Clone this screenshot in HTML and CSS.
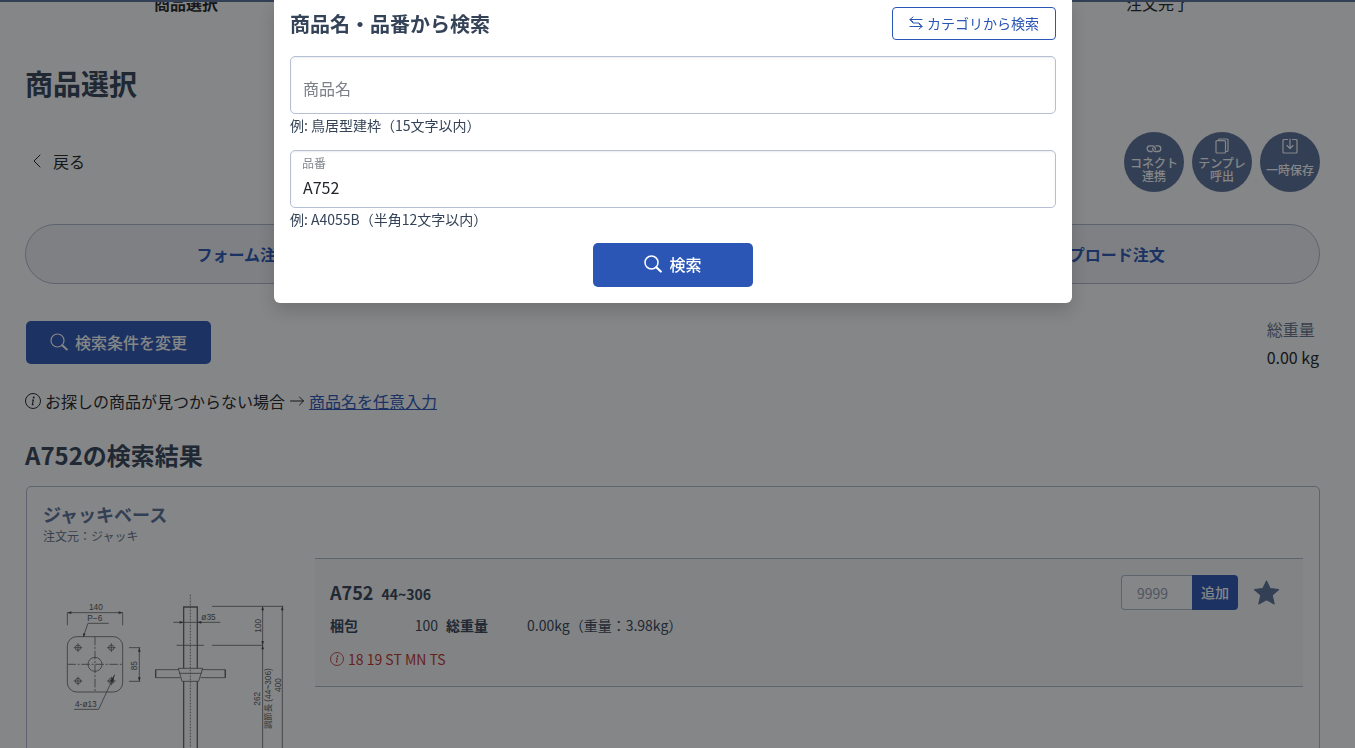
FILE: index.html
```html
<!DOCTYPE html>
<html lang="ja">
<head>
  <meta charset="UTF-8" />
  <meta name="viewport" content="width=device-width, initial-scale=1.0"/>
  <title>商品選択</title>
  <link rel="stylesheet" href="styles.css">
</head>
<body>

  <ol class="stepper">
    <li class="step current">商品選択</li>
    <li class="step">注文完了</li>
  </ol>

  <main class="page">
    <h1 class="page-title">商品選択</h1>

    <div class="toolbar">
      <a class="back-link" href="#">
        <svg class="icon" viewBox="0 0 16 16"><path d="M11 2 5 8 11 14" fill="none" stroke="currentColor" stroke-linecap="round" stroke-linejoin="round"/></svg>
        戻る
      </a>
      <div class="round-actions">
        <button class="round-btn" type="button">
          <svg class="icon" viewBox="0 0 16 16"><g fill="none" stroke="currentColor" stroke-width="1.3" stroke-linecap="round"><path d="M6 13.500H4a2.800 2.800 0 0 1 0-5.600h2.500A2.800 2.800 0 0 1 9.200 11.500"/><path d="M10 7.900h2A2.800 2.800 0 0 1 12 13.500H9.500a2.800 2.800 0 0 1-2.700-3.600"/></g></svg>
          <span>コネクト<br>連携</span>
        </button>
        <button class="round-btn" type="button">
          <svg class="icon" viewBox="0 0 16 16"><g fill="none" stroke="currentColor" stroke-width="1.2" stroke-linejoin="round"><rect x="2" y="2.600" width="9.500" height="12.400" rx="1"/><path d="M4.500 2.600V2a1 1 0 0 1 1-1h7.500a1 1 0 0 1 1 1V12.500a1 1 0 0 1-1 1h-1.500"/></g></svg>
          <span>テンプレ<br>呼出</span>
        </button>
        <button class="round-btn" type="button">
          <svg class="icon" viewBox="0 0 16 16"><g fill="none" stroke="currentColor" stroke-width="1.2" stroke-linecap="round" stroke-linejoin="round"><path d="M5.500 1.500H2a1 1 0 0 0-1 1V14a1 1 0 0 0 1 1h12a1 1 0 0 0 1-1V2.500a1 1 0 0 0-1-1h-3.500"/><path d="M8 1v9.500M5 7.500l3 3 3-3"/></g></svg>
          <span>一時保存</span>
        </button>
      </div>
    </div>

    <nav class="tabs">
      <a class="tab" href="#">フォーム注文</a>
      <a class="tab" href="#">アップロード注文</a>
    </nav>

    <div class="search-row">
      <button class="btn btn-change" type="button">
        <svg class="icon-lg" viewBox="0 0 18 18"><circle cx="7.500" cy="7.500" r="6.500" fill="none" stroke="currentColor" stroke-width="1.200"/><path d="m12.300 12.300 4.500 4.200" stroke="currentColor" stroke-width="2" stroke-linecap="round"/></svg>
        検索条件を変更
      </button>
      <dl class="total">
        <dt>総重量</dt>
        <dd>0.00 kg</dd>
      </dl>
    </div>

    <p class="note">
      <svg class="icon" viewBox="0 0 16 16"><circle cx="8" cy="8" r="7.500" fill="none" stroke="currentColor"/><path d="M7 7h1.400l-1.100 4.600h1.200" fill="none" stroke="currentColor" stroke-width="1.100"/><circle cx="8.700" cy="4.600" r="1" fill="currentColor"/></svg>
      <span>お探しの商品が見つからない場合</span>
      <svg class="icon" viewBox="0 0 16 16"><path d="M1.500 8h13M10.500 4l4 4-4 4" fill="none" stroke="currentColor" stroke-linecap="round" stroke-linejoin="round"/></svg>
      <a href="#">商品名を任意入力</a>
    </p>

    <h2 class="result-title">A752の検索結果</h2>

    <section class="card">
      <h3 class="card-title">ジャッキベース</h3>
      <p class="card-sub">注文元：ジャッキ</p>
      <div class="card-body">
        <svg class="drawing" viewBox="0 0 272 260">
          <g transform="translate(-23 2) scale(.3333)" fill="none" stroke="#666" stroke-width="2.500">
            <!-- base plate -->
            <rect x="142" y="230" width="166" height="166" rx="28"/>
            <circle cx="225" cy="313" r="21"/>
            <path d="M142 313h166M225 230v166" stroke-dasharray="26 5 6 5"/>
            <g>
              <circle cx="174" cy="263" r="8"/><circle cx="274" cy="263" r="8"/>
              <circle cx="174" cy="363" r="8"/><circle cx="274" cy="363" r="8"/>
              <path d="M161 263h26M174 250v26M261 263h26M274 250v26M161 363h26M174 350v26M261 363h26M274 350v26"/>
            </g>
            <path d="M142 196v-38h166v38M266 190h-62l-14 40M162 448h74l48-104M327 263h34M327 364h34M358 263v101"/>
            <!-- screw shaft and handle -->
            <path d="M511 104v500" stroke-dasharray="5 4"/>
            <path d="M491 325V141h41v184M491 364v240M532 364v240" stroke-width="4"/>
            <path d="M475 325h73l-12 39h-50zM477 340h68M477 329h-70v24h74M546 329h70v24h-74"/>
            <path d="M407 329v24M616 329v24" stroke-width="4"/>
            <path d="M460 187h141M470 256h82M576 139h214M576 256h152M728 139v480M787 139v480"/>
            <!-- arrow heads -->
            <g fill="#444" stroke="none">
              <path d="m142 158 12-4v8zM308 158l-12-4v8zM189 232l1-13 7 3zM284 344l-14 20 8 4zM358 263l-4 12h8zM358 364l-4-12h8zM491 187l-12-4v8zM532 187l12-4v8zM728 139l-4 12h8zM728 256l-4-12h8zM728 256l-4 12h8zM787 139l-4 12h8z"/>
            </g>
            <g class="dims">
              <text x="207" y="151">140</text>
              <text x="202" y="184">P−6</text>
              <text x="165" y="440">4-ø13</text>
              <text x="544" y="179">ø35</text>
              <text transform="translate(352 331) rotate(-90)">85</text>
              <text transform="translate(723 218) rotate(-90)">100</text>
              <text transform="translate(721 437) rotate(-90)">262</text>
              <text transform="translate(752 507) rotate(-90)">調節長 (44~306)</text>
              <text transform="translate(782 396) rotate(-90)">400</text>
            </g>
          </g>
        </svg>

        <div class="item">
          <div class="item-head">
            <span class="item-code">A752</span>
            <span class="item-range">44~306</span>
            <form class="qty">
              <input type="text" placeholder="9999" aria-label="数量">
              <button type="button">追加</button>
            </form>
            <button class="star" type="button" aria-label="お気に入り">
              <svg viewBox="0 0 24 24"><path d="M12 1l3.500 7.200 8.200.9-6.200 5.500L19.400 23 12 18.900 4.600 23l1.900-8.400L.300 9.100l8.200-.9z" fill="currentColor" stroke="currentColor" stroke-linejoin="round"/></svg>
            </button>
          </div>
          <dl class="item-info">
            <dt>梱包</dt>
            <dd class="pack">100</dd>
            <dt>総重量</dt>
            <dd class="weight">0.00kg（重量：3.98kg）</dd>
          </dl>
          <p class="item-alert">
            <svg viewBox="0 0 16 16"><circle cx="8" cy="8" r="7.400" fill="none" stroke="currentColor"/><path d="M7 7h1.400l-1.100 4.600h1.200" fill="none" stroke="currentColor" stroke-width="1.100"/><circle cx="8.700" cy="4.600" r="1" fill="currentColor"/></svg>
            18 19 ST MN TS
          </p>
        </div>
      </div>
    </section>
  </main>

  <div class="backdrop">
    <form class="modal" role="dialog" aria-labelledby="modalTitle">
      <div class="modal-head">
        <h2 id="modalTitle">商品名・品番から検索</h2>
        <button class="btn-outline" type="button">
          <svg viewBox="0 0 14 14"><path d="M4 1 1 3.500 4 6M1 3.500H13M10 8l3 2.500L10 13M13 10.500H1M1 3.500 4 7H10l3 3.500" fill="none" stroke="currentColor" stroke-linecap="round" stroke-linejoin="round"/></svg>
          カテゴリから検索
        </button>
      </div>

      <div class="field">
        <label class="sr-only" for="productName">商品名</label>
        <input type="text" id="productName" placeholder="商品名">
        <p class="hint">例: 鳥居型建枠（15文字以内）</p>
      </div>

      <div class="field">
        <label for="productCode">品番</label>
        <input type="text" id="productCode" value="A752">
        <p class="hint">例: A4055B（半角12文字以内）</p>
      </div>

      <button class="btn btn-search" type="button">
        <svg class="icon-lg" viewBox="0 0 18 18"><circle cx="7.500" cy="7.500" r="6.500" fill="none" stroke="currentColor" stroke-width="1.500"/><path d="m12.300 12.300 4.500 4.200" stroke="currentColor" stroke-width="2.200" stroke-linecap="round"/></svg>
        検索
      </button>
    </form>
  </div>

</body>
</html>
```

FILE: styles.css
```css
:root {
  --primary: #2b56b6;
  --navy: #5b7199;
  --text: #344357;
  --muted: #66728c;
  --border: #b5c0d4;
  --line: #aeb9cf;
}

* {
  box-sizing: border-box;
}

body {
  margin: 0;
  height: 100vh;
  overflow: hidden;
  font-family: "Noto Sans CJK JP", sans-serif;
  font-size: 16px;
  line-height: 24px;
  color: #212529;
  background: #fff;
}

h1, h2, h3, p, dl, dd, ol {
  margin: 0;
  padding: 0;
}

button, input {
  font-family: inherit;
  font-size: inherit;
}

button {
  cursor: pointer;
  border: none;
  padding: 0;
}

a {
  color: var(--primary);
}

svg {
  flex: none;
}

.icon {
  width: 16px;
  height: 16px;
}

.icon-lg {
  width: 18px;
  height: 18px;
}

/* stepper */
.stepper {
  display: flex;
  justify-content: space-between;
  align-items: flex-end;
  height: 15px;
  padding: 0 35px 0 24px;
  border-top: 2px solid var(--navy);
  overflow: hidden;
  list-style: none;
}

.step {
  width: 25%;
  text-align: center;
}

.step.current {
  font-weight: bold;
}

/* page */
.page {
  padding: 47px 35px 0 25px;
}

.page-title {
  font-size: 28px;
  line-height: 42px;
  color: var(--text);
}

.toolbar {
  display: flex;
  justify-content: space-between;
  align-items: center;
  margin-top: 28px;
}

.back-link {
  display: flex;
  align-items: center;
  gap: 8px;
  padding: 0 0 2px 4px;
  color: inherit;
  text-decoration: none;
}

.round-actions {
  display: flex;
  gap: 8px;
}

.round-btn {
  display: flex;
  flex-direction: column;
  align-items: center;
  width: 60px;
  height: 60px;
  padding-top: 6px;
  border-radius: 50%;
  background: var(--navy);
  color: #fff;
  font-size: 12px;
  font-weight: 500;
  line-height: 13px;
}

.round-btn span {
  display: flex;
  align-items: center;
  height: 30px;
  white-space: nowrap;
}

.tabs {
  display: flex;
  justify-content: space-between;
  align-items: center;
  height: 60px;
  margin-top: 32px;
  padding: 0 4px;
  border: 1px solid var(--line);
  border-radius: 30px;
  background: #f1f3f8;
}

.tab {
  width: 33.33%;
  text-align: center;
  font-weight: bold;
  text-decoration: none;
}

.search-row {
  display: flex;
  justify-content: space-between;
  align-items: flex-end;
  margin-top: 31px;
}

.btn {
  display: flex;
  align-items: center;
  justify-content: center;
  gap: 7px;
  padding-bottom: 2px;
  border-radius: 5px;
  background: var(--primary);
  color: #fff;
  font-weight: 500;
}

.btn-change {
  height: 43px;
  margin: 0 1px 7px;
  padding: 0 24px 1px;
}

.total {
  line-height: 28px;
  padding-right: 1px;
}

.total dt {
  color: var(--muted);
}

.note {
  display: flex;
  align-items: center;
  gap: 4px;
  margin-top: 18px;
}

.result-title {
  margin-top: 24px;
  font-size: 24px;
  line-height: 36px;
  color: var(--text);
}

/* result card */
.card {
  margin: 13px 0 0 1px;
  padding: 14px 16px;
  border: 1px solid var(--line);
  border-radius: 5px;
}

.card-title {
  font-size: 18px;
  line-height: 26px;
  color: var(--navy);
}

.card-sub {
  font-size: 12px;
  line-height: 18px;
  color: var(--muted);
}

.card-body {
  display: flex;
  align-items: flex-start;
  margin-top: 13px;
}

.drawing {
  width: 272px;
  height: 260px;
}

.dims text {
  font-family: "Liberation Sans", "Noto Sans CJK JP", sans-serif;
  font-size: 25px;
  fill: #555;
  stroke: none;
}

.item {
  flex: 1;
  padding: 16px 24px 16px 15px;
  border-top: 1px solid var(--line);
  border-bottom: 1px solid var(--line);
  background: #f8f9f9;
  font-size: 14px;
  line-height: 22px;
  color: var(--text);
}

.item-head {
  display: flex;
  align-items: center;
}

.item-code {
  padding-bottom: 2px;
  font-size: 18px;
  font-weight: bold;
}

.item-range {
  margin: 2px 0 0 8px;
  font-weight: bold;
}

.qty {
  display: flex;
  height: 35px;
  margin-left: auto;
}

.qty input {
  width: 71px;
  padding: 0 15px;
  border: 1px solid var(--line);
  border-right: none;
  border-radius: 4px 0 0 4px;
  background: #fff;
}

.qty input::placeholder {
  color: #929db5;
}

.qty button {
  width: 46px;
  padding-bottom: 2px;
  border-radius: 0 4px 4px 0;
  background: var(--primary);
  color: #fff;
  font-weight: 500;
}

.star {
  display: flex;
  margin-left: 16px;
  background: none;
  color: var(--navy);
}

.star svg {
  width: 25px;
  height: 25px;
}

.item-info {
  display: flex;
  margin-top: 4px;
}

.item-info dt {
  font-weight: bold;
}

.pack {
  width: 80px;
  margin-right: 8px;
  text-align: right;
}

.weight {
  margin-left: 39px;
}

.item-alert {
  display: flex;
  align-items: center;
  gap: 4px;
  margin-top: 12px;
  color: #c0352f;
}

.item-alert svg {
  width: 14px;
  height: 14px;
}

/* search modal */
.backdrop {
  position: fixed;
  inset: 0;
  display: flex;
  justify-content: center;
  align-items: flex-start;
  padding-right: 9px;
  background: rgba(11, 13, 15, 0.5);
}

.modal {
  width: 100%;
  max-width: 798px;
  padding: 7px 16px 16px;
  border-radius: 0 0 6px 6px;
  background: #fff;
  box-shadow: 0 8px 16px rgba(0, 0, 0, 0.15);
  color: var(--text);
}

.modal-head {
  display: flex;
  justify-content: space-between;
  align-items: center;
  margin-bottom: 16px;
}

.modal-head h2 {
  font-size: 20px;
  line-height: 30px;
}

.btn-outline {
  display: flex;
  align-items: center;
  gap: 4px;
  height: 33px;
  padding: 0 16px 2px;
  border: 1px solid var(--primary);
  border-radius: 4px;
  background: #fff;
  color: var(--primary);
  font-size: 14px;
}

.btn-outline svg {
  width: 14px;
  height: 14px;
}

.field {
  position: relative;
  margin-bottom: 14px;
}

.field label {
  position: absolute;
  top: 4px;
  left: 12px;
  font-size: 12px;
  line-height: 18px;
  color: #84888f;
}

.field input {
  display: block;
  width: 100%;
  height: 58px;
  padding: 20px 12px 14px;
  border: 1px solid var(--border);
  border-radius: 5px;
  box-shadow: inset 0 1px 2px rgba(0, 0, 0, 0.075);
  color: #212529;
  line-height: 24px;
}

#productCode {
  padding: 24px 12px 8px;
}

.field input::placeholder {
  color: #7c8087;
}

.hint {
  font-size: 14px;
  line-height: 22px;
}

.sr-only {
  clip-path: inset(50%);
}

.btn-search {
  width: 160px;
  height: 44px;
  margin: -1px auto 0;
}
```
